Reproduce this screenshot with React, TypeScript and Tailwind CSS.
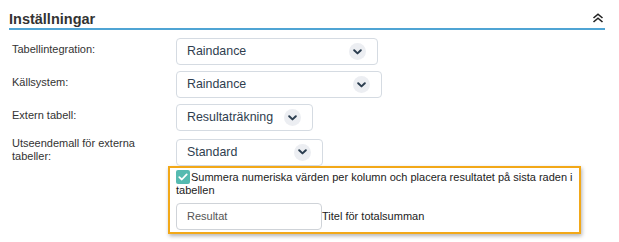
import React from "react";

function Chevron() {
  return (
    <span className="flex items-center justify-center w-[17px] h-[17px] rounded-full bg-[#eceef2] shrink-0">
      <svg width="9" height="6" viewBox="0 0 9 6">
        <path d="M1.2 1.2 L4.5 4.4 L7.8 1.2" fill="none" stroke="#2c3e50" strokeWidth="2" strokeLinecap="round" strokeLinejoin="round" />
      </svg>
    </span>
  );
}

function Select({ value, w }: { value: string; w: string }) {
  return (
    <div className={`${w} h-[27px] flex items-center justify-between border border-[#d5dbe2] rounded-[4px] bg-white pl-[10px] pr-[11px] text-[12.4px] text-[#2f3e4f]`}>
      <span>{value}</span>
      <Chevron />
    </div>
  );
}

function Row({ label, children }: { label: React.ReactNode; children: React.ReactNode }) {
  return (
    <div className="flex items-center">
      <div className="w-[176px] shrink-0 pl-[12px] pr-[30px] pb-[4px] text-[11px] leading-[13px] text-[#333]">{label}</div>
      {children}
    </div>
  );
}

export default function App() {
  return (
    <div className="w-[619px] h-[242px] bg-white font-['Liberation_Sans',Arial,sans-serif] overflow-hidden">
      <div className="pl-[9px] pr-[14px] pt-[10px]">
        <div className="flex items-center justify-between border-b-2 border-[#4fa4d4]">
          <h2 className="text-[14.5px] leading-[18px] font-bold text-[#333]">Inställningar</h2>
          <svg width="12" height="10" viewBox="0 0 12 10" className="mr-[1px] mb-[2px]">
            <path d="M1.5 5 L6 1.2 L10.5 5" fill="none" stroke="#222" strokeWidth="1.6" />
            <path d="M1.5 9 L6 5.2 L10.5 9" fill="none" stroke="#222" strokeWidth="1.6" />
          </svg>
        </div>
      </div>
      <div className="mt-[8px] flex flex-col gap-[6px]">
        <Row label="Tabellintegration:">
          <Select value="Raindance" w="w-[202px]" />
        </Row>
        <Row label="Källsystem:">
          <Select value="Raindance" w="w-[206px]" />
        </Row>
        <Row label="Extern tabell:">
          <Select value="Resultaträkning" w="w-[137px]" />
        </Row>
        <Row label="Utseendemall för externa tabeller:">
          <Select value="Standard" w="w-[147px]" />
        </Row>
      </div>
      <div className="-mt-[1px] ml-[168px] w-[413px] border-2 border-[#f2a818] bg-white pl-[6px] pr-[6px] pt-[2px] pb-[2px] shadow-[1px_2px_4px_rgba(0,0,0,0.3)]">
        <div className="text-[11px] leading-[13px] text-[#222]">
          <span className="inline-block w-[14px] h-[14px] rounded-[2px] bg-[#55bab0] align-[-3px] mr-[1px]">
            <svg width="14" height="14" viewBox="0 0 14 14" className="block">
              <path d="M3.3 7.2 L5.8 9.5 L10.7 4.4" fill="none" stroke="#fff" strokeWidth="1.8" strokeLinecap="round" strokeLinejoin="round" />
            </svg>
          </span>
          Summera numeriska värden per kolumn och placera resultatet på sista raden i tabellen
        </div>
        <div className="mt-[6px] flex items-center">
          <div className="w-[146px] h-[27px] border border-[#cfd3d8] rounded-[4px] pl-[10px] flex items-center text-[11px] text-[#555]">
            Resultat
          </div>
          <span className="text-[11px] text-[#222]">Titel för totalsumman</span>
        </div>
      </div>
    </div>
  );
}
